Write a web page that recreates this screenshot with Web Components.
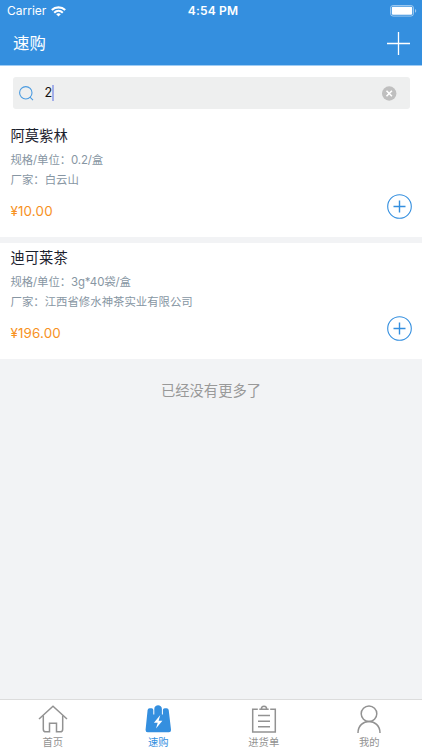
<!DOCTYPE html>
<html lang="zh-CN">
<head>
<meta charset="UTF-8">
<meta name="viewport" content="width=device-width, initial-scale=1">
<title>速购</title>
<style>
  html, body {
    margin: 0;
    height: 100%;
  }

  body {
    --blue: #348fdf;
    --page: #f2f3f5;
    font-family: Inter, "Noto Sans CJK SC", sans-serif;
    background: var(--page);
    overflow: hidden;
  }
</style>
</head>
<body>
<quick-buy-app></quick-buy-app>

<script>
class StatusBar extends HTMLElement {
  constructor() {
    super();
    this.attachShadow({ mode: 'open' });
  }

  connectedCallback() {
    this.shadowRoot.innerHTML = `
      <style>
        :host {
          display: grid;
          grid-template-columns: 1fr auto 1fr;
          align-items: center;
          height: 22px;
          padding: 0 5px 0 7px;
          color: #fff;
          font-size: 12px;
          line-height: 22px;
        }
        .carrier { display: flex; align-items: center; gap: 5px; }
        .time { font-weight: 600; letter-spacing: 0.2px; padding-left: 2px; }
        .battery { justify-self: end; }
        svg { display: block; }
      </style>
      <div class="carrier">
        <span>${this.getAttribute('carrier')}</span>
        <svg width="15" height="11" viewBox="0 0 15 11" fill="none" stroke="#fff" stroke-width="2.1">
          <path d="M.8 4.1C4.5.4 10.5.4 14.2 4.1M3.2 6.7C5.7 4.3 9.3 4.3 11.8 6.7"/>
          <path d="M5.2 8.2c1.3-1.2 3.3-1.2 4.6 0L7.5 10.6z" fill="#fff" stroke="none"/>
        </svg>
      </div>
      <span class="time">${this.getAttribute('time')}</span>
      <svg class="battery" width="27" height="12" viewBox="0 0 27 12">
        <rect x=".5" y=".5" width="23" height="10.6" rx="2.6" fill="none" stroke="#fff" stroke-opacity=".5"/>
        <rect x="1.8" y="1.8" width="20.4" height="8" rx="1.2" fill="#fff"/>
        <path d="M25 4v3.8c1.7-.7 1.7-3.1 0-3.8z" fill="#fff" fill-opacity=".5"/>
      </svg>
    `;
  }
}

class NavBar extends HTMLElement {
  constructor() {
    super();
    this.attachShadow({ mode: 'open' });
  }

  connectedCallback() {
    this.shadowRoot.innerHTML = `
      <style>
        :host {
          display: flex;
          justify-content: space-between;
          align-items: center;
          height: 43px;
          padding: 0 12px 0 13px;
          color: #fff;
          font-size: 16.4px;
          line-height: 43px;
        }
        svg { display: block; }
      </style>
      <slot></slot>
      <svg width="23" height="23" viewBox="0 0 23 23" stroke="#fff" stroke-width="1.3">
        <path d="M11.5 0v23M0 11.5h23"/>
      </svg>
    `;
  }
}

class SearchField extends HTMLElement {
  constructor() {
    super();
    this.attachShadow({ mode: 'open' });
  }

  connectedCallback() {
    this.shadowRoot.innerHTML = `
      <style>
        :host {
          display: block;
          padding: 11px 12.5px 11.5px;
          background: #fff;
        }
        .field {
          display: flex;
          align-items: center;
          height: 32px;
          padding: 0 13px 0 6px;
          border-radius: 3px;
          background: #eeefef;
        }
        .value {
          flex: 1;
          margin-left: 11px;
          display: flex;
          align-items: center;
          font-size: 12.6px;
          line-height: 16px;
          color: #111;
        }
        .caret { width: 2px; height: 16px; margin-left: -0.5px; background: #a3aee9; }
        svg { display: block; }
      </style>
      <div class="field">
        <svg width="15" height="15" viewBox="0 0 15 15" fill="none" stroke="#4b9be0" stroke-width="1.1">
          <circle cx="6.8" cy="6.8" r="6.2"/>
          <path d="M11 11.1l3 3"/>
        </svg>
        <div class="value"><span>${this.getAttribute('value')}</span><i class="caret"></i></div>
        <svg width="15" height="15" viewBox="0 0 15 15">
          <circle cx="7.2" cy="7.5" r="7.2" fill="#bfbfbf"/>
          <path d="M4.5 4.8l5.4 5.4M9.9 4.8l-5.4 5.4" stroke="#fff" stroke-width="1.6"/>
        </svg>
      </div>
    `;
  }
}

class ProductItem extends HTMLElement {
  constructor() {
    super();
    this.attachShadow({ mode: 'open' });
  }

  connectedCallback() {
    this.shadowRoot.innerHTML = `
      <style>
        :host {
          display: flex;
          justify-content: space-between;
          align-items: flex-end;
          box-sizing: border-box;
          height: 116px;
          padding: 0 10.5px 0 10.5px;
          background: #fff;
        }
        .info { align-self: flex-start; padding-top: 4px; }
        .name { font-size: 14.3px; line-height: 22px; color: #1c222e; }
        .meta { font-size: 11.4px; line-height: 20px; color: #8796a3; }
        .name + .meta { margin-top: 3px; letter-spacing: -0.1px; }
        .price { margin-top: 11.4px; font-size: 13.4px; line-height: 20px; color: #f7911e; letter-spacing: 0.15px; }
        svg { display: block; margin-bottom: 17.5px; }
      </style>
      <div class="info">
        <div class="name"><slot></slot></div>
        <div class="meta">规格/单位：${this.getAttribute('spec')}</div>
        <div class="meta">厂家：${this.getAttribute('maker')}</div>
        <div class="price">¥${this.getAttribute('price')}</div>
      </div>
      <svg width="25" height="25" viewBox="0 0 25 25" fill="none" stroke="#348fdf">
        <circle cx="12.5" cy="12.5" r="11.8" stroke-width="1.1"/>
        <path d="M12.5 6.5v12M6.5 12.5h12" stroke-width="1.4"/>
      </svg>
    `;
  }
}

const TAB_ICONS = {
  home: `
    <path d="M1 14L15 1.2 29 14"/>
    <path d="M5.3 10.6V24.2q0 2.6 2.6 2.6h3.6V18.2h7v8.6h3.6q2.6 0 2.6-2.6V10.6"/>
  `,
  bag: `
    <path fill="currentColor" stroke="none" d="M6.6 3.2H8.6Q10.3 3.2 10.3 4.9V9.4H11.3V4C11.3-.9 18.9-.9 18.9 4V9.4H19.9V4.9Q19.9 3.2 21.7 3.2H23.6Q25.4 3.2 25.7 5L28 24.6Q28.2 27.2 26 27.2H4.6Q2.4 27.2 2.6 24.6L4.6 5Q4.8 3.2 6.6 3.2z"/>
    <path fill="#fff" stroke="none" d="M17.3 10l-6.4 7.8h3.8l-1.7 5.8 6.4-7.9h-3.8z"/>
  `,
  list: `
    <path d="M8.8 4.2H3.7v22.9h22.6V4.2h-5.1"/>
    <path d="M10.3 4.2h9.4M12.3 4.2c0-4.1 5.4-4.1 5.4 0"/>
    <path d="M9 10.6h12M9 16.2h12M9 21.8h12"/>
  `,
  user: `
    <circle cx="15" cy="8.7" r="7.8"/>
    <path d="M4 28c0-15.4 22-15.4 22 0"/>
  `
};

class TabItem extends HTMLElement {
  constructor() {
    super();
    this.attachShadow({ mode: 'open' });
  }

  connectedCallback() {
    this.shadowRoot.innerHTML = `
      <style>
        :host {
          display: flex;
          flex-direction: column;
          align-items: center;
          flex: 1;
          padding-top: 5px;
          color: #929292;
          font-size: 10.3px;
          line-height: 16px;
        }
        :host([active]) { color: var(--blue); }
        svg { display: block; }
      </style>
      <svg width="30" height="29" viewBox="0 0 30 29" fill="none" stroke="currentColor" stroke-width="1.5">
        ${TAB_ICONS[this.getAttribute('icon')]}
      </svg>
      <slot></slot>
    `;
  }
}

class QuickBuyApp extends HTMLElement {
  constructor() {
    super();
    this.attachShadow({ mode: 'open' });
  }

  connectedCallback() {
    this.shadowRoot.innerHTML = `
      <style>
        :host {
          display: flex;
          flex-direction: column;
          height: 100vh;
        }
        header { background: var(--blue); border-bottom: 1px solid #9fccf4; }
        main { flex: 1; }
        .list { display: grid; gap: 6px; }
        .end {
          padding-top: 21px;
          text-align: center;
          font-size: 14.3px;
          line-height: 22px;
          color: #999;
        }
        nav {
          display: flex;
          height: 50px;
          background: #fff;
          border-top: 1px solid #dcdcdc;
        }
      </style>
      <header>
        <status-bar carrier="Carrier" time="4:54 PM"></status-bar>
        <nav-bar>速购</nav-bar>
      </header>
      <main>
        <search-field value="2"></search-field>
        <div class="list">
          <product-item spec="0.2/盒" maker="白云山" price="10.00">阿莫紫林</product-item>
          <product-item spec="3g*40袋/盒" maker="江西省修水神茶实业有限公司" price="196.00">迪可莱茶</product-item>
        </div>
        <div class="end">已经没有更多了</div>
      </main>
      <nav>
        <tab-item icon="home">首页</tab-item>
        <tab-item icon="bag" active>速购</tab-item>
        <tab-item icon="list">进货单</tab-item>
        <tab-item icon="user">我的</tab-item>
      </nav>
    `;
  }
}

customElements.define('status-bar', StatusBar);
customElements.define('nav-bar', NavBar);
customElements.define('search-field', SearchField);
customElements.define('product-item', ProductItem);
customElements.define('tab-item', TabItem);
customElements.define('quick-buy-app', QuickBuyApp);
</script>
</body>
</html>
